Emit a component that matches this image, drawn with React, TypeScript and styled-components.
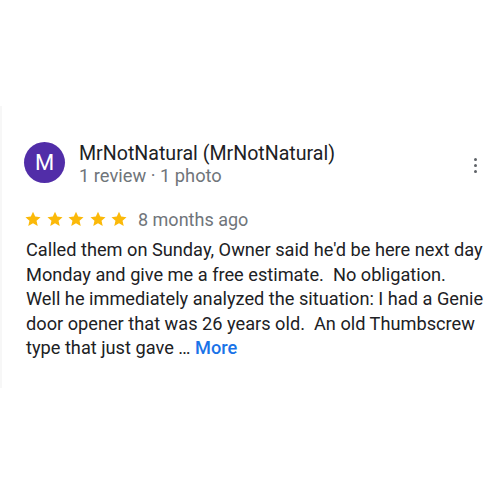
import React from "react";
import styled, { createGlobalStyle } from "styled-components";

const Global = createGlobalStyle`
  html, body { margin: 0; padding: 0; background: #ffffff; }
  body { font-family: Roboto, "Liberation Sans", Arial, sans-serif; }
`;

const Page = styled.div`
  width: 500px;
  height: 500px;
  box-sizing: border-box;
  padding: 106px 0 0 0;
  background: #fff;
`;

const Card = styled.div`
  box-sizing: border-box;
  height: 282px;
  padding: 36px 18px 0 24px;
  border-left: 2px solid #f7f7f7;
`;

const Header = styled.div`
  display: flex;
  align-items: flex-start;
  gap: 14px;
`;

const Avatar = styled.div`
  width: 41px;
  height: 41px;
  border-radius: 50%;
  background: #512da8;
  color: #fff;
  display: flex;
  align-items: center;
  justify-content: center;
  font-size: 22px;
  flex: none;
  margin-left: -2px;
`;

const Info = styled.div`
  flex: 1;
  display: flex;
  flex-direction: column;
  margin-top: 1px;
`;

const Name = styled.div`
  font-size: 19.6px;
  line-height: 22px;
  color: #202124;
`;

const Meta = styled.div`
  font-size: 18.3px;
  line-height: 22px;
  color: #70757a;
`;

const MenuButton = styled.div`
  width: 10px;
  display: flex;
  flex-direction: column;
  align-items: center;
  gap: 3px;
  margin-top: 16px;
  margin-right: 2px;
`;

const Dot = styled.span`
  width: 3px;
  height: 3px;
  border-radius: 50%;
  background: #5f6368;
`;

const RatingRow = styled.div`
  display: flex;
  align-items: center;
  margin-top: 20px;
  height: 24px;
`;

const Stars = styled.div`
  display: flex;
  gap: 5.5px;
  margin-left: -1px;
  margin-right: 11px;
`;

const Time = styled.span`
  font-size: 18px;
  color: #70757a;
`;

const Body = styled.p`
  margin: 7px 0 0 0;
  font-size: 18.2px;
  line-height: 24.5px;
  color: #202124;
  white-space: pre;
`;

const More = styled.span`
  color: #1a73e8;
  font-weight: 500;
`;

const Star = () => (
  <svg width="16" height="16" viewBox="0 0 24 24">
    <path
      fill="#fbb909"
      d="M12 1l3.3 7.4 8 .8-6 5.4 1.8 7.9L12 18.4l-7.1 4.1 1.8-7.9-6-5.4 8-.8z"
    />
  </svg>
);

export default function App() {
  return (
    <>
      <Global />
      <Page>
        <Card>
          <Header>
            <Avatar>M</Avatar>
            <Info>
              <Name>MrNotNatural (MrNotNatural)</Name>
              <Meta>1 review · 1 photo</Meta>
            </Info>
            <MenuButton>
              <Dot />
              <Dot />
              <Dot />
            </MenuButton>
          </Header>
          <RatingRow>
            <Stars>
              {[0, 1, 2, 3, 4].map((i) => (
                <Star key={i} />
              ))}
            </Stars>
            <Time>8 months ago</Time>
          </RatingRow>
          <Body>
            {"Called them on Sunday, Owner said he'd be here next day\nMonday and give me a free estimate.  No obligation.\nWell he immediately analyzed the situation: I had a Genie\ndoor opener that was 26 years old.  An old Thumbscrew\ntype that just gave … "}
            <More>More</More>
          </Body>
        </Card>
      </Page>
    </>
  );
}
